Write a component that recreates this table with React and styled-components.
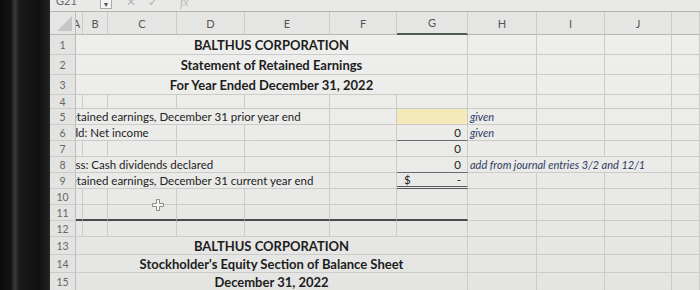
import React from "react";
import styled, { createGlobalStyle } from "styled-components";

const COLS = "26px 7px 25px 69px 68px 85px 67px 71px 69px 68px 67px 1fr";
const GRID = "#cbcbc9";

const Global = createGlobalStyle`
  html, body { margin: 0; padding: 0; background: #0d0d0d; }
  body { width: 700px; height: 290px; overflow: hidden; font-family: Lato, "Open Sans", sans-serif; }
`;

const Screen = styled.div`
  display: flex;
  width: 700px;
  height: 290px;
  overflow: hidden;
`;

const Bezel = styled.div`
  flex: 0 0 50px;
  background: linear-gradient(90deg, #0b0b0b 0, #141414 11px, #3b3b3b 15px, #1b1b1b 19px, #101010 38px, #1e1e1e 48px, #2a2a2a 50px);
`;

const Sheet = styled.div`
  flex: 1;
  min-width: 0;
  display: flex;
  flex-direction: column;
  overflow: hidden;
  background: linear-gradient(180deg, #efefed 0%, #ebebe9 50%, #e4e4e2 100%);
`;

const FormulaBar = styled.div`
  flex: 0 0 12px;
  box-sizing: border-box;
  display: flex;
  align-items: flex-start;
  border-bottom: 1px solid #b3b3b1;
  background: #e9e9e7;
  overflow: hidden;
`;

const NameBox = styled.div`
  width: 50px;
  margin-top: -6px;
  padding-left: 6px;
  font-size: 11px;
  line-height: 14px;
  color: #666;
  box-sizing: border-box;
`;

const Drop = styled.div`
  width: 12px;
  height: 9px;
  box-sizing: border-box;
  border: 1px solid #a9a9a7;
  border-top: none;
  background: #f4f4f2;
  font-size: 7px;
  line-height: 8px;
  text-align: center;
  color: #555;
`;

const BarIcons = styled.div`
  display: flex;
  gap: 12px;
  margin: -5px 0 0 14px;
  font-size: 12px;
  line-height: 14px;
  color: #b8b8b6;
`;

const Fx = styled.span`
  font-family: "Liberation Serif", serif;
  font-style: italic;
  margin-left: 10px;
`;

const Row = styled.div`
  display: grid;
  grid-template-columns: ${COLS};
  height: ${(p) => p.$h}px;
  flex: 0 0 ${(p) => p.$h}px;
`;

const HeadCell = styled.div`
  box-sizing: border-box;
  border-right: 1px solid ${GRID};
  border-bottom: ${(p) => (p.$selected ? "2px solid #4d5c52" : "1px solid #b7b7b5")};
  background: #e5e5e3;
  color: #555;
  font-size: 11px;
  display: flex;
  align-items: center;
  justify-content: center;
  overflow: hidden;
  white-space: nowrap;
  text-indent: ${(p) => p.$indent || 0}px;
`;

const Corner = styled(HeadCell)`
  position: relative;
  border-right: 1px solid #bdbdbb;
  &::after {
    content: "";
    position: absolute;
    right: 3px;
    bottom: 3px;
    border-left: 15px solid transparent;
    border-bottom: 15px solid #c6c6c4;
  }
`;

const RowHead = styled.div`
  box-sizing: border-box;
  border-right: 1px solid #bdbdbb;
  border-bottom: 1px solid ${GRID};
  background: #e3e3e1;
  color: #666;
  font-size: 10.5px;
  display: flex;
  align-items: center;
  justify-content: center;
  overflow: hidden;
`;

const Cell = styled.div`
  position: relative;
  box-sizing: border-box;
  grid-column: span ${(p) => p.$span || 1};
  border-right: 1px solid ${GRID};
  border-bottom: ${(p) =>
    p.$under === "double"
      ? "3px double #5a5a5a"
      : p.$under === "single"
      ? "1px solid #6a6a6a"
      : p.$under === "thick"
      ? "2px solid #4a4a4a"
      : `1px solid ${GRID}`};
  background: ${(p) => (p.$fill ? "#f5e9b8" : "transparent")};
  display: flex;
  align-items: center;
  overflow: ${(p) => (p.$visible ? "visible" : "hidden")};
  z-index: ${(p) => (p.$visible ? 2 : "auto")};
  white-space: nowrap;
`;

const TitleCell = styled(Cell)`
  justify-content: center;
  font-weight: 700;
  font-size: 13px;
  color: #1d1d1d;
`;

const LabelCell = styled(Cell)`
  font-size: 11.5px;
  color: #222;
`;

const LabelText = styled.span`
  margin-left: -12px;
`;

const ValueCell = styled(Cell)`
  justify-content: ${(p) => (p.$split ? "space-between" : "flex-end")};
  padding: 0 6px 0 ${(p) => (p.$split ? 7 : 0)}px;
  font-size: 11.5px;
  color: #222;
`;

const NoteCell = styled(Cell)`
  padding-left: 2px;
  font-size: 11px;
  font-style: italic;
  color: #2e3d63;
`;

const Cursor = styled.svg`
  position: absolute;
  left: 44px;
  top: 10px;
`;

const blanks = (n, key) =>
  Array.from({ length: n }, (_, i) => <Cell key={`${key}-${i}`} />);

const LETTERS = ["B", "C", "D", "E", "F", "G", "H", "I", "J", ""];

function TitleRow({ n, h, text }) {
  return (
    <Row $h={h}>
      <RowHead>{n}</RowHead>
      <TitleCell $span={7}>{text}</TitleCell>
      {blanks(4, n)}
    </Row>
  );
}

export default function App() {
  return (
    <>
      <Global />
      <Screen>
        <Bezel />
        <Sheet>
          <FormulaBar>
            <NameBox>G21</NameBox>
            <Drop>▼</Drop>
            <BarIcons>
              <span>✕</span>
              <span>✓</span>
              <Fx>fx</Fx>
            </BarIcons>
          </FormulaBar>

          <Row $h={23}>
            <Corner />
            <HeadCell $indent={-5}>A</HeadCell>
            {LETTERS.map((l) => (
              <HeadCell key={l || "K"} $selected={l === "G"}>
                {l}
              </HeadCell>
            ))}
          </Row>

          <TitleRow n={1} h={20} text="BALTHUS CORPORATION" />
          <TitleRow n={2} h={20} text="Statement of Retained Earnings" />
          <TitleRow n={3} h={20} text="For Year Ended December 31, 2022" />

          <Row $h={14}>
            <RowHead>4</RowHead>
            {blanks(11, 4)}
          </Row>

          <Row $h={16}>
            <RowHead>5</RowHead>
            <LabelCell $span={5}>
              <LabelText>Retained earnings, December 31 prior year end</LabelText>
            </LabelCell>
            <Cell />
            <ValueCell $fill />
            <NoteCell>given</NoteCell>
            {blanks(3, 5)}
          </Row>

          <Row $h={16}>
            <RowHead>6</RowHead>
            <LabelCell $span={3}>
              <LabelText>Add: Net income</LabelText>
            </LabelCell>
            {blanks(3, "6a")}
            <ValueCell $under="single">0</ValueCell>
            <NoteCell>given</NoteCell>
            {blanks(3, "6b")}
          </Row>

          <Row $h={16}>
            <RowHead>7</RowHead>
            {blanks(6, "7a")}
            <ValueCell>0</ValueCell>
            {blanks(4, "7b")}
          </Row>

          <Row $h={16}>
            <RowHead>8</RowHead>
            <LabelCell $span={4}>
              <LabelText>Less: Cash dividends declared</LabelText>
            </LabelCell>
            {blanks(2, "8a")}
            <ValueCell $under="single">0</ValueCell>
            <NoteCell $span={3}>add from journal entries 3/2 and 12/1</NoteCell>
            {blanks(1, "8b")}
          </Row>

          <Row $h={16}>
            <RowHead>9</RowHead>
            <LabelCell $span={5}>
              <LabelText>Retained earnings, December 31 current year end</LabelText>
            </LabelCell>
            <Cell />
            <ValueCell $split $under="double">
              <span>$</span>
              <span>-</span>
            </ValueCell>
            {blanks(4, 9)}
          </Row>

          <Row $h={16}>
            <RowHead>10</RowHead>
            <Cell />
            <Cell />
            <Cell $visible>
              <Cursor width="12" height="12" viewBox="0 0 12 12">
                <path
                  d="M4.5 0.5h3v4h4v3h-4v4h-3v-4h-4v-3h4z"
                  fill="#f7f7f5"
                  stroke="#8a8a88"
                  strokeWidth="1"
                />
              </Cursor>
            </Cell>
            {blanks(8, 10)}
          </Row>

          <Row $h={16}>
            <RowHead>11</RowHead>
            {Array.from({ length: 7 }, (_, i) => (
              <Cell key={`11-${i}`} $under="thick" />
            ))}
            {blanks(4, 11)}
          </Row>

          <Row $h={16}>
            <RowHead>12</RowHead>
            {blanks(11, 12)}
          </Row>

          <TitleRow n={13} h={18} text="BALTHUS CORPORATION" />
          <TitleRow n={14} h={18} text="Stockholder's Equity Section of Balance Sheet" />
          <TitleRow n={15} h={18} text="December 31, 2022" />
        </Sheet>
      </Screen>
    </>
  );
}
